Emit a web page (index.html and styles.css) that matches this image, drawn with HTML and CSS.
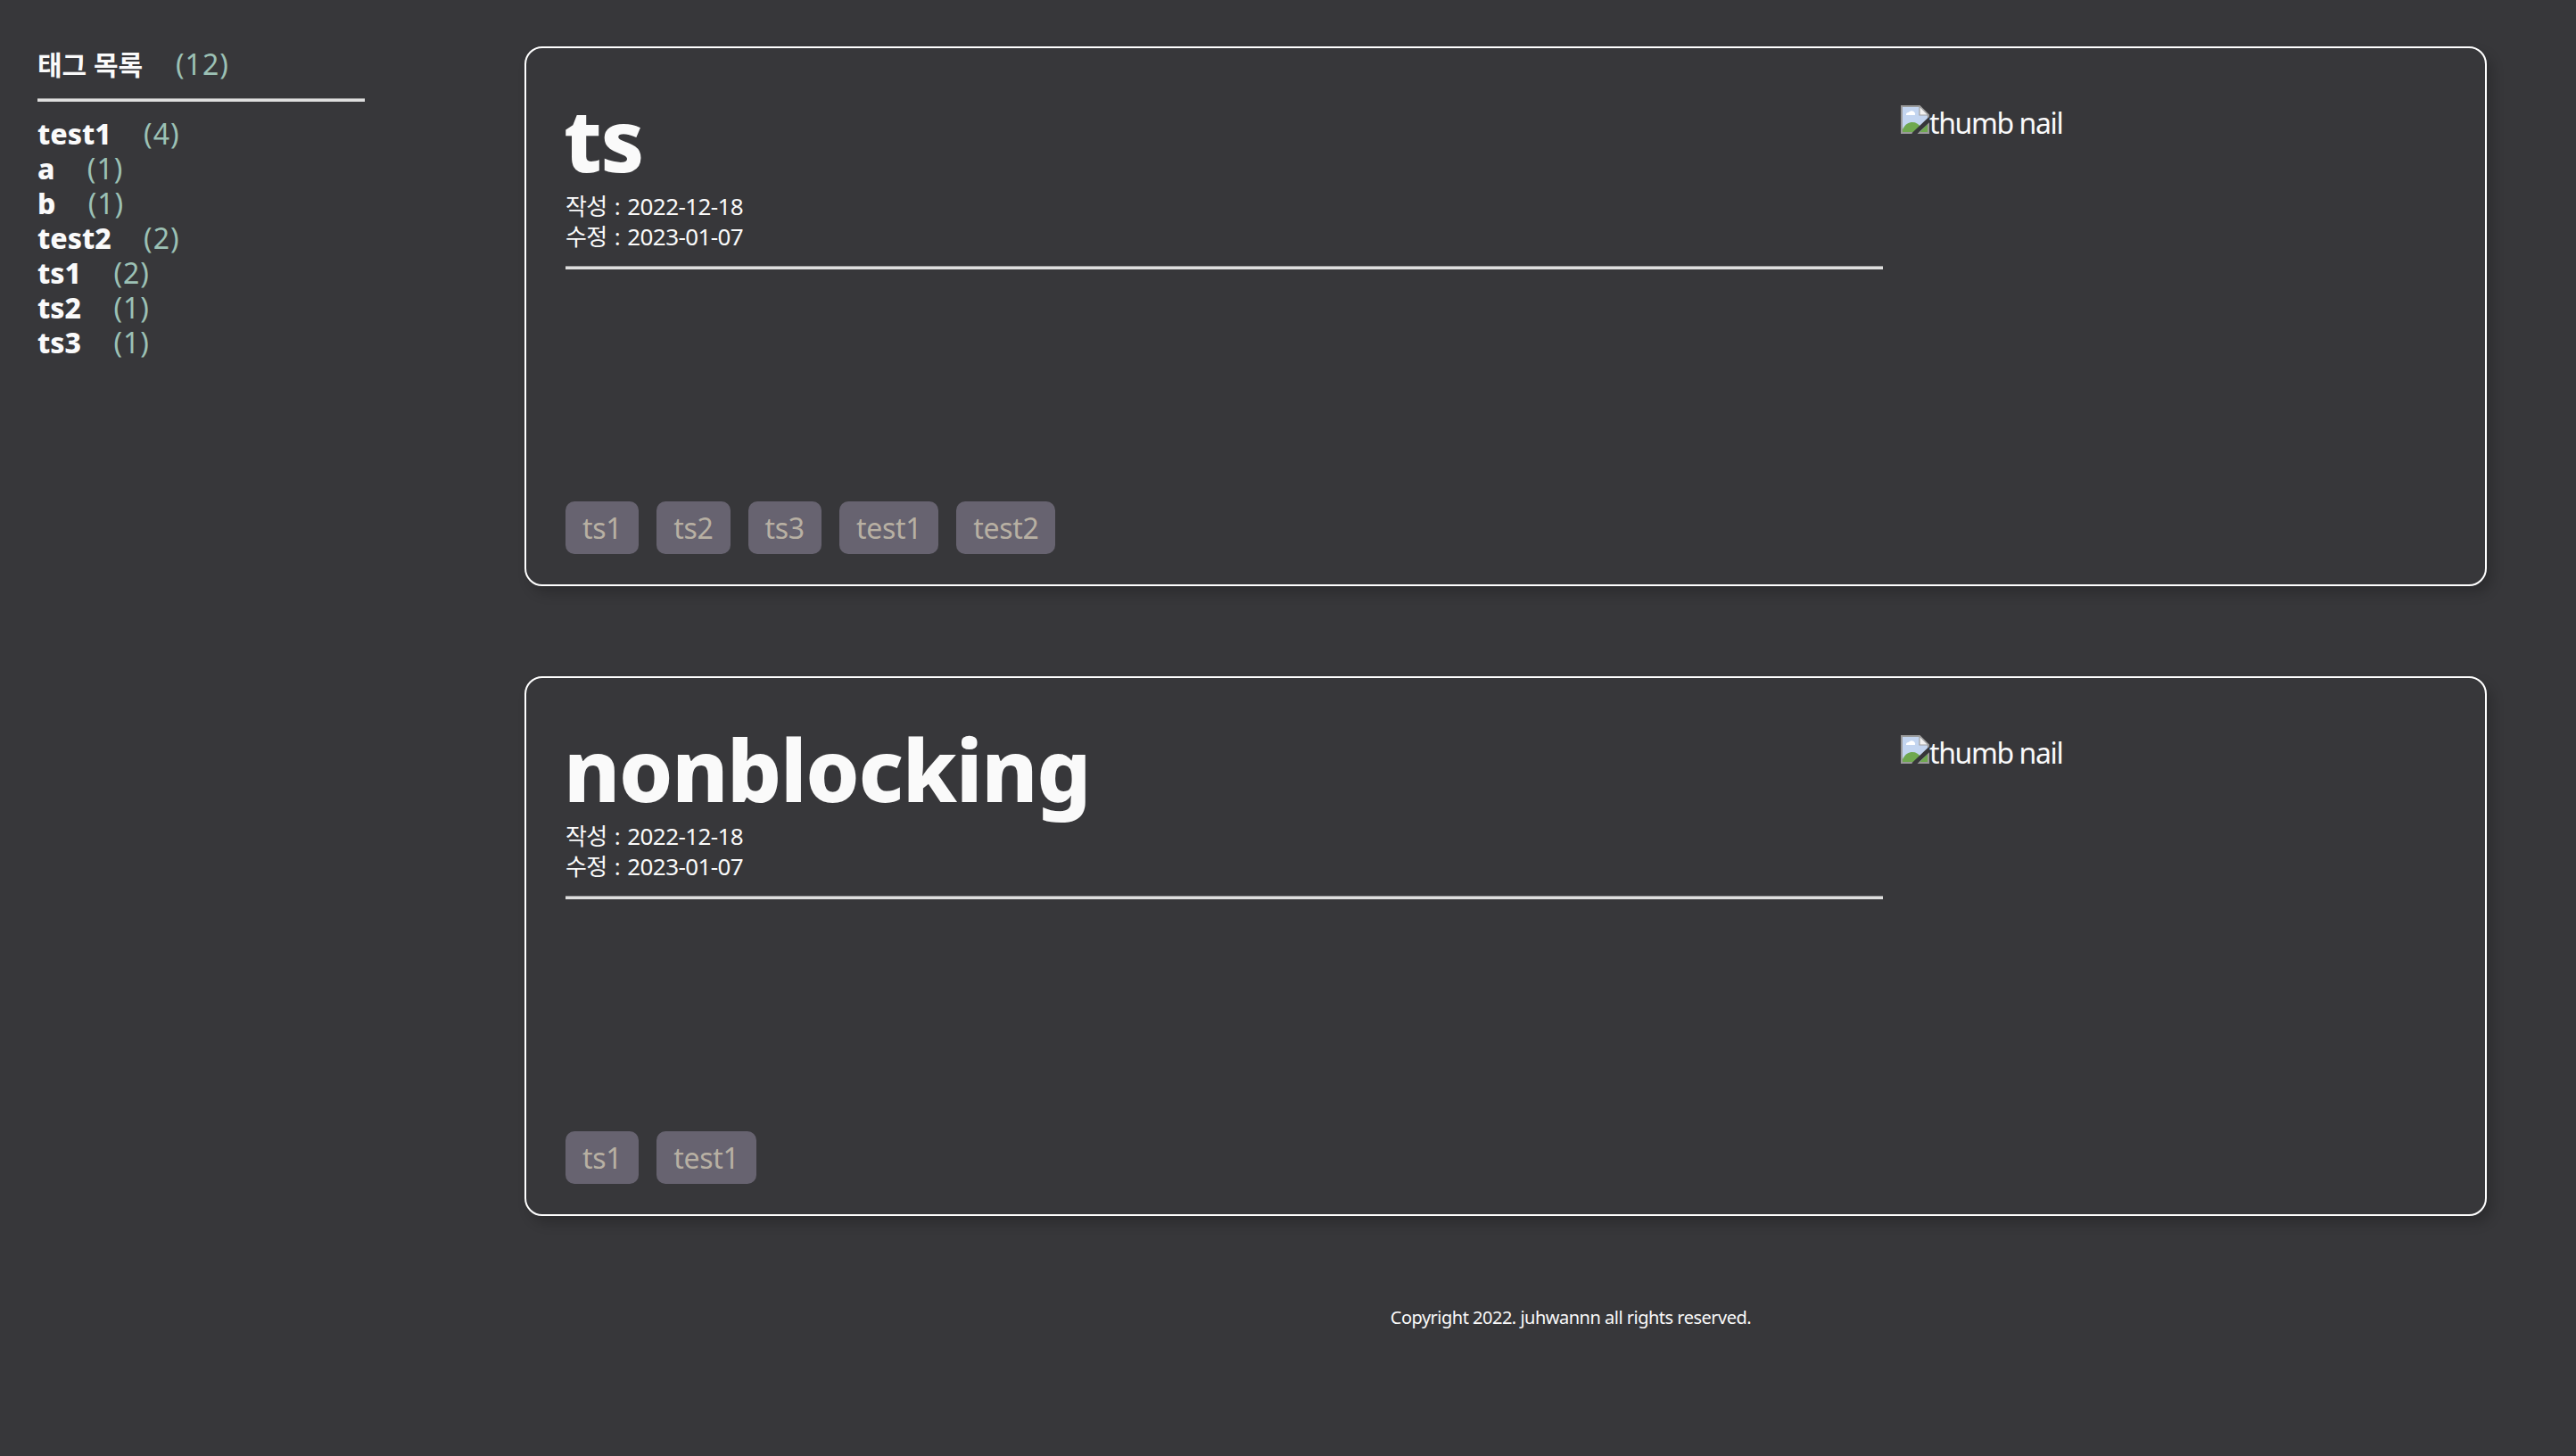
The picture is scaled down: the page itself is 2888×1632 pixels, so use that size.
FILE: index.html
```html
<!DOCTYPE html>
<html lang="ko">
<head>
  <meta charset="UTF-8" />
  <title>Blog</title>
  <link rel="stylesheet" href="styles.css">
</head>
<body>
  <div class="page">
    <aside class="sidebar">
      <h2 class="tag-head">태그 목록 <span class="count">(12)</span></h2>
      <hr class="rule">
      <ul class="tag-list">
        <li>test1 <span class="count">(4)</span></li>
        <li>a <span class="count">(1)</span></li>
        <li>b <span class="count">(1)</span></li>
        <li>test2 <span class="count">(2)</span></li>
        <li>ts1 <span class="count">(2)</span></li>
        <li>ts2 <span class="count">(1)</span></li>
        <li>ts3 <span class="count">(1)</span></li>
      </ul>
    </aside>

    <main class="posts">
      <article class="post">
        <div class="post-body">
          <h1 class="post-title">ts</h1>
          <p class="post-date">작성 : 2022-12-18</p>
          <p class="post-date">수정 : 2023-01-07</p>
          <hr class="rule">
          <div class="tags">
            <span class="tag">ts1</span>
            <span class="tag">ts2</span>
            <span class="tag">ts3</span>
            <span class="tag">test1</span>
            <span class="tag">test2</span>
          </div>
        </div>
        <div class="thumb">
          <svg class="broken" viewBox="0 0 16 16" width="32" height="32"><use href="#broken-img"/></svg><span>thumb nail</span>
        </div>
      </article>

      <article class="post">
        <div class="post-body">
          <h1 class="post-title">nonblocking</h1>
          <p class="post-date">작성 : 2022-12-18</p>
          <p class="post-date">수정 : 2023-01-07</p>
          <hr class="rule">
          <div class="tags">
            <span class="tag">ts1</span>
            <span class="tag">test1</span>
          </div>
        </div>
        <div class="thumb">
          <svg class="broken" viewBox="0 0 16 16" width="32" height="32"><use href="#broken-img"/></svg><span>thumb nail</span>
        </div>
      </article>

      <footer class="copyright">Copyright 2022. juhwannn all rights reserved.</footer>
    </main>
  </div>

  <svg width="0" height="0" class="defs">
    <symbol id="broken-img" viewBox="0 0 16 16">
      <path d="M0.5 0.5H10.5L15.5 5.5V15.5H0.5Z" fill="#c3d5f0" stroke="#9a9a9a"/>
      <path d="M10.5 0.5V5.5H15.5Z" fill="#f2f2f2" stroke="#a0a0a0" stroke-width="0.6"/>
      <path d="M3 5.5a2 1.5 0 0 1 1.5-1.6a2 2 0 0 1 3.4 0.4a1 1 0 0 1 0 1.2Z" fill="#fff"/>
      <path d="M1 15V13.5C2.5 10.5 4.5 9.5 6.5 9.5C8.5 9.5 10 10.5 11 12L8 15Z" fill="#6fa84f"/>
      <path d="M12.5 13L15 10.5V15H10.5Z" fill="#6fa84f"/>
      <path d="M7 16.5L16.5 7.5" stroke="#37373a" stroke-width="2.4"/>
    </symbol>
  </svg>
</body>
</html>
```

FILE: styles.css
```css
body {
  margin: 0;
  background-color: #37373a;
  color: #fafafa;
  font-family: "Noto Sans", "Noto Sans CJK KR", sans-serif;
}
.page {
  display: flex;
  min-height: 1632px;
}
.defs {
  position: absolute;
}
.sidebar {
  width: 367px;
  padding: 52px 0 0 42px;
  flex-shrink: 0;
  margin-right: 179px;
}
.tag-head {
  margin: 0;
  font-size: 30px;
  line-height: 40px;
  font-weight: 700;
}
.count {
  margin-left: 28px;
  color: #9cc1b5;
  font-weight: 400;
  font-size: 32px;
  letter-spacing: 1px;
}
.tag-head .count {
  margin-left: 29px;
}
.rule {
  margin: 0;
  height: 0;
  border: 0;
  border-top: 1px solid #9a9a9a;
  border-bottom: 3px solid #dedede;
}
.sidebar .rule {
  margin: 17px 0 16px;
}
.tag-list {
  margin: 0;
  padding: 0;
  list-style: none;
  font-size: 32px;
  line-height: 39px;
  font-weight: 800;
}
.posts {
  width: 2200px;
}
.post {
  display: flex;
  height: 605px;
  margin-top: 52px;
  margin-bottom: 101px;
  box-sizing: border-box;
  border: 2px solid #fff;
  border-radius: 20px;
  padding: 44px;
  box-shadow: 6px 8px 14px rgba(0, 0, 0, 0.2);
}
.post + .post {
  margin-top: 0;
}
.post-body {
  width: 1477px;
  display: flex;
  flex-direction: column;
}
.post-title {
  margin: 0 0 0 -2px;
  font-size: 96px;
  line-height: 116px;
  font-weight: 800;
  letter-spacing: -1.3px;
}
.post-date {
  margin: 0;
  font-size: 26px;
  line-height: 34px;
  letter-spacing: -0.6px;
  word-spacing: 2px;
}
.post-body .rule {
  margin-top: 16px;
}
.tags {
  display: flex;
  gap: 20px;
  margin-top: auto;
  margin-bottom: -10px;
}
.tag {
  padding: 0 19px;
  height: 59px;
  line-height: 59px;
  background-color: #676370;
  color: #b8b0a3;
  border-radius: 10px;
  font-size: 32px;
  letter-spacing: -0.3px;
}
.thumb {
  display: flex;
  align-items: flex-start;
  margin-left: 20px;
  margin-top: 18px;
  font-size: 32px;
  letter-spacing: -1.4px;
}
.broken {
  flex-shrink: 0;
  margin-top: 2px;
}
.copyright {
  margin-left: 146px;
  text-align: center;
  font-size: 20px;
  line-height: 26px;
  letter-spacing: -0.5px;
}
```
